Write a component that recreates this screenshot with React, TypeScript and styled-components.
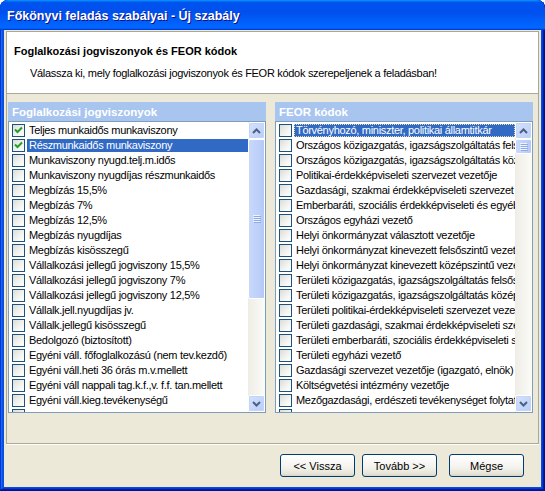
import React from 'react';
import styled, { createGlobalStyle } from 'styled-components';

const GlobalStyle = createGlobalStyle`
  html, body {
    margin: 0;
    padding: 0;
    background: #ffffff;
  }
  body {
    font-family: 'Liberation Sans', Arial, sans-serif;
    font-size: 11px;
  }
`;

interface IListItem {
  label: string;
  checked?: boolean;
  selected?: boolean;
  focused?: boolean;
}

const jogviszonyok: IListItem[] = [
  { label: 'Teljes munkaidős munkaviszony', checked: true },
  { label: 'Részmunkaidős munkaviszony', checked: true, selected: true },
  { label: 'Munkaviszony nyugd.telj.m.idős' },
  { label: 'Munkaviszony nyugdíjas részmunkaidős' },
  { label: 'Megbízás 15,5%' },
  { label: 'Megbízás 7%' },
  { label: 'Megbízás 12,5%' },
  { label: 'Megbízás nyugdíjas' },
  { label: 'Megbízás kisösszegű' },
  { label: 'Vállalkozási jellegű jogviszony 15,5%' },
  { label: 'Vállalkozási jellegű jogviszony 7%' },
  { label: 'Vállalkozási jellegű jogviszony 12,5%' },
  { label: 'Vállalk.jell.nyugdíjas jv.' },
  { label: 'Vállalk.jellegű kisösszegű' },
  { label: 'Bedolgozó (biztosított)' },
  { label: 'Egyéni váll. főfoglalkozású (nem tev.kezdő)' },
  { label: 'Egyéni váll.heti 36 órás m.v.mellett' },
  { label: 'Egyéni váll nappali tag.k.f.,v. f.f. tan.mellett' },
  { label: 'Egyéni váll.kieg.tevékenységű' },
  { label: '' },
];

const feorKodok: IListItem[] = [
  { label: 'Törvényhozó, miniszter, politikai államtitkár', selected: true, focused: true },
  { label: 'Országos közigazgatás, igazságszolgáltatás felsőszintű vezetője' },
  { label: 'Országos közigazgatás, igazságszolgáltatás középszintű vezetője' },
  { label: 'Politikai-érdekképviseleti szervezet vezetője' },
  { label: 'Gazdasági, szakmai érdekképviseleti szervezet vezetője' },
  { label: 'Emberbaráti, szociális érdekképviseleti és egyéb szervezet vezetője' },
  { label: 'Országos egyházi vezető' },
  { label: 'Helyi önkormányzat választott vezetője' },
  { label: 'Helyi önkormányzat kinevezett felsőszintű vezetője' },
  { label: 'Helyi önkormányzat kinevezett középszintű vezetője' },
  { label: 'Területi közigazgatás, igazságszolgáltatás felsőszintű vezetője' },
  { label: 'Területi közigazgatás, igazságszolgáltatás középszintű vezetője' },
  { label: 'Területi politikai-érdekképviseleti szervezet vezetője' },
  { label: 'Területi gazdasági, szakmai érdekképviseleti szervezet vezetője' },
  { label: 'Területi emberbaráti, szociális érdekképviseleti szervezet vezetője' },
  { label: 'Területi egyházi vezető' },
  { label: 'Gazdasági szervezet vezetője (igazgató, elnök)' },
  { label: 'Költségvetési intézmény vezetője' },
  { label: 'Mezőgazdasági, erdészeti tevékenységet folytató egység vezetője' },
  { label: '' },
];

const Window = styled.div`
  width: 545px;
  height: 491px;
  box-sizing: border-box;
  display: flex;
  flex-direction: column;
  padding: 0 4px 4px 4px;
  border-radius: 8px 8px 0 0;
  background: #0a4be0;
  box-shadow: inset -1px -1px #00138c, inset 1px 1px #0831d9, inset -2px -2px #001ea0, inset 2px 2px #166aee,
    inset -3px -3px #003bda, inset 3px 3px #0855dd;
  overflow: hidden;
`;

const TitleBar = styled.div`
  height: 30px;
  flex: none;
  margin: 0 -4px;
  padding: 2px 0 0 7px;
  box-sizing: border-box;
  display: flex;
  align-items: center;
  border-radius: 8px 8px 0 0;
  background: linear-gradient(
    180deg,
    #0997ff,
    #0053ee 8%,
    #0050ee 40%,
    #0066ff 88%,
    #0066ff 93%,
    #005bff 95%,
    #003dd7 96%,
    #003dd7
  );
  color: #ffffff;
  font-family: 'Liberation Sans', Arial, sans-serif;
  font-weight: bold;
  font-size: 12.5px;
  text-shadow: 1px 1px #0f1089;
`;

const Body = styled.div`
  flex: 1;
  display: flex;
  flex-direction: column;
  background: #ece9d8;
  padding: 1px 2px 0 2px;
`;

const Frame = styled.div`
  height: 411px;
  flex: none;
  display: flex;
  flex-direction: column;
  border: 1px solid #aca899;
  box-shadow: 0 1px 0 #ffffff;
`;

const Header = styled.div`
  height: 62px;
  flex: none;
  box-sizing: border-box;
  background: #ffffff;
  border-bottom: 1px solid #aca899;
  padding: 12px 0 0 7px;
`;

const HeaderTitle = styled.div`
  font-weight: bold;
  font-size: 11px;
  line-height: 14px;
  color: #000000;
`;

const HeaderText = styled.div`
  margin: 8px 0 0 16px;
  font-size: 11px;
  letter-spacing: -0.3px;
  line-height: 14px;
  color: #000000;
`;

const Lists = styled.div`
  flex: 1;
  display: flex;
  gap: 9px;
  padding: 8px 5px 0 1px;
`;

const Panel = styled.div`
  width: 258px;
  display: flex;
  flex-direction: column;
`;

const PanelTitle = styled.div`
  height: 19px;
  box-sizing: border-box;
  padding: 3px 0 0 4px;
  background: #a8c5ef;
  color: #ffffff;
  font-weight: bold;
  font-size: 11.5px;
  line-height: 14px;
`;

const ListBox = styled.div`
  height: 292px;
  box-sizing: border-box;
  border: 1px solid #7f9db9;
  background: #ffffff;
  display: flex;
`;

const Rows = styled.div`
  flex: 1;
  min-width: 0;
  overflow: hidden;
  padding-top: 1px;
`;

const Row = styled.div`
  height: 15px;
  display: flex;
  align-items: center;
  white-space: nowrap;
  padding-left: 3px;
`;

const CheckBox = styled.span`
  flex: none;
  width: 13px;
  height: 13px;
  box-sizing: border-box;
  border: 1px solid #1c5180;
  background: linear-gradient(135deg, #dcdcd7 0%, #f4f4f1 60%, #ffffff 100%);
  display: flex;
  align-items: center;
  justify-content: center;
`;

const RowText = styled.span<{ $selected?: boolean; $focused?: boolean }>`
  margin-left: 2px;
  padding: 0 2px;
  height: 13px;
  line-height: 13px;
  flex: 1;
  letter-spacing: -0.3px;
  color: ${(p) => (p.$selected ? '#ffffff' : '#000000')};
  background: ${(p) => (p.$selected ? '#316ac5' : 'transparent')};
  outline: ${(p) => (p.$focused ? '1px dotted #e9dca0' : 'none')};
  outline-offset: -1px;
`;

const ScrollBar = styled.div`
  width: 17px;
  flex: none;
  display: flex;
  flex-direction: column;
  background: linear-gradient(90deg, #eeede5, #fbfbf8);
`;

const ScrollButton = styled.div`
  width: 17px;
  height: 17px;
  flex: none;
  box-sizing: border-box;
  border: 1px solid #ffffff;
  border-radius: 2px;
  background: linear-gradient(135deg, #d5e2fd, #b9cdf8);
  box-shadow: inset 0 0 0 1px #c3d4fa;
  display: flex;
  align-items: center;
  justify-content: center;
`;

const Track = styled.div`
  flex: 1;
  display: flex;
  flex-direction: column;
`;

const Thumb = styled.div<{ $size: number }>`
  height: ${(p) => p.$size}px;
  flex: none;
  box-sizing: border-box;
  border: 1px solid #ffffff;
  border-radius: 2px;
  background: linear-gradient(90deg, #c9d8fc, #bccff9 70%, #b4c8f6);
  display: flex;
  align-items: center;
  justify-content: center;
`;

const Footer = styled.div`
  flex: 1;
  display: flex;
  justify-content: flex-end;
  align-items: flex-start;
  padding: 10px 15px 0 0;
`;

const Button = styled.button<{ $gap?: number }>`
  width: 75px;
  height: 23px;
  margin-left: ${(p) => p.$gap ?? 0}px;
  border: 1px solid #003c74;
  border-radius: 3px;
  background: linear-gradient(180deg, #ffffff, #f3f2ed 60%, #e6e3d6 90%, #d6d0c5);
  font-family: 'Liberation Sans', Arial, sans-serif;
  font-size: 11px;
  color: #000000;
  padding: 0;
`;

const CheckMark = () => (
  <svg width="9" height="9" viewBox="0 0 9 9">
    <path d="M1 3.5 L3.5 6 L8 1.5" fill="none" stroke="#21a121" strokeWidth="2" />
  </svg>
);

const Chevron = ({ up }: { up?: boolean }) => (
  <svg width="9" height="6" viewBox="0 0 9 6">
    <path d={up ? 'M1 5 L4.5 1.5 L8 5' : 'M1 1 L4.5 4.5 L8 1'} fill="none" stroke="#4d6185" strokeWidth="2" />
  </svg>
);

const Grip = () => (
  <svg width="8" height="8" viewBox="0 0 8 8">
    {[0, 2, 4, 6].map((y) => (
      <React.Fragment key={y}>
        <rect x="0" y={y} width="7" height="1" fill="#eef4fe" />
        <rect x="1" y={y + 1} width="7" height="1" fill="#8caae6" />
      </React.Fragment>
    ))}
  </svg>
);

interface ICheckListProps {
  title: string;
  items: IListItem[];
  thumbSize: number;
}

const CheckList = ({ title, items, thumbSize }: ICheckListProps) => (
  <Panel>
    <PanelTitle>{title}</PanelTitle>
    <ListBox>
      <Rows>
        {items.map((item, index) => (
          <Row key={index}>
            <CheckBox>{item.checked ? <CheckMark /> : null}</CheckBox>
            <RowText $selected={item.selected} $focused={item.focused}>
              {item.label}
            </RowText>
          </Row>
        ))}
      </Rows>
      <ScrollBar>
        <ScrollButton>
          <Chevron up />
        </ScrollButton>
        <Track>
          <Thumb $size={thumbSize}>
            <Grip />
          </Thumb>
        </Track>
        <ScrollButton>
          <Chevron />
        </ScrollButton>
      </ScrollBar>
    </ListBox>
  </Panel>
);

const App = () => (
  <>
    <GlobalStyle />
    <Window>
      <TitleBar>Főkönyvi feladás szabályai - Új szabály</TitleBar>
      <Body>
        <Frame>
          <Header>
            <HeaderTitle>Foglalkozási jogviszonyok és FEOR kódok</HeaderTitle>
            <HeaderText>Válassza ki, mely foglalkozási jogviszonyok és FEOR kódok szerepeljenek a feladásban!</HeaderText>
          </Header>
          <Lists>
            <CheckList title="Foglalkozási jogviszonyok" items={jogviszonyok} thumbSize={160} />
            <CheckList title="FEOR kódok" items={feorKodok} thumbSize={15} />
          </Lists>
        </Frame>
        <Footer>
          <Button>&lt;&lt; Vissza</Button>
          <Button $gap={7}>Tovább &gt;&gt;</Button>
          <Button $gap={12}>Mégse</Button>
        </Footer>
      </Body>
    </Window>
  </>
);

export default App;
